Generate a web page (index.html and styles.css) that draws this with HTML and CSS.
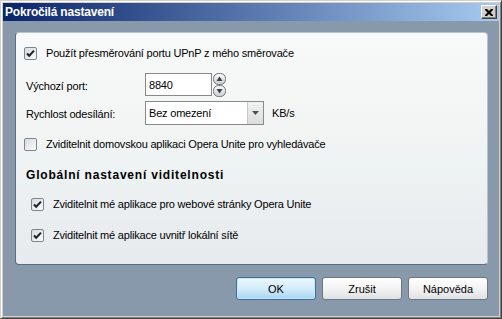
FILE: index.html
```html
<!DOCTYPE html>
<html>
<head>
<meta charset="utf-8">
<link rel="stylesheet" href="styles.css">
</head>
<body>
<div class="window">
  <div class="titlebar">
    <span class="title">Pokročilá nastavení</span>
    <span class="close">
      <svg width="8" height="7" viewBox="0 0 8 7"><path d="M0 0h2l2 2 2-2h2v1L5.5 3.5 8 6v1H6L4 5 2 7H0V6l2.5-2.5L0 1z" fill="#000"/></svg>
    </span>
  </div>
  <div class="body">
    <div class="panel">
      <label class="row r1 check">
        <span class="cb on"><svg width="13" height="13" viewBox="0 0 13 13"><path d="M3 6.5l2.2 2.3L10 3.6" fill="none" stroke="#1d2329" stroke-width="2"/></svg></span>
        <span>Použít přesměrování portu UPnP z mého směrovače</span>
      </label>
      <div class="row r2 field">
        <span class="lbl">Výchozí port:</span>
        <span class="input">8840</span>
        <span class="spin">
          <svg width="13" height="24" viewBox="0 0 13 24">
            <defs><linearGradient id="sg" x1="0" y1="0" x2="0" y2="1"><stop offset="0" stop-color="#fdfdfd"/><stop offset="1" stop-color="#c9ccd1"/></linearGradient></defs>
            <rect x="0.5" y="0.5" width="12" height="11" rx="5" fill="url(#sg)" stroke="#6b737b"/>
            <rect x="0.5" y="12.5" width="12" height="11" rx="5" fill="url(#sg)" stroke="#6b737b"/>
            <path d="M3.5 8h6L6.5 3.5z" fill="#3a4048"/>
            <path d="M3.5 16h6L6.5 20.5z" fill="#3a4048"/>
          </svg>
        </span>
      </div>
      <div class="row r3 field">
        <span class="lbl">Rychlost odesílání:</span>
        <span class="select"><span class="seltext">Bez omezení</span><span class="arrow"><svg width="7" height="4" viewBox="0 0 7 4"><path d="M0 0h7L3.5 4z" fill="#4a525a"/></svg></span></span>
        <span class="unit">KB/s</span>
      </div>
      <label class="row r4 check">
        <span class="cb"></span>
        <span>Zviditelnit domovskou aplikaci Opera Unite pro vyhledávače</span>
      </label>
      <div class="row r5 heading">Globální nastavení viditelnosti</div>
      <label class="row r6 check indent">
        <span class="cb on"><svg width="13" height="13" viewBox="0 0 13 13"><path d="M3 6.5l2.2 2.3L10 3.6" fill="none" stroke="#1d2329" stroke-width="2"/></svg></span>
        <span>Zviditelnit mé aplikace pro webové stránky Opera Unite</span>
      </label>
      <label class="row r7 check indent">
        <span class="cb on"><svg width="13" height="13" viewBox="0 0 13 13"><path d="M3 6.5l2.2 2.3L10 3.6" fill="none" stroke="#1d2329" stroke-width="2"/></svg></span>
        <span>Zviditelnit mé aplikace uvnitř lokální sítě</span>
      </label>
    </div>
    <div class="buttons">
      <button class="btn default">OK</button>
      <button class="btn">Zrušit</button>
      <button class="btn">Nápověda</button>
    </div>
  </div>
</div>
</body>
</html>
```

FILE: styles.css
```css
html, body {
  margin: 0;
  padding: 0;
  background: #d4d0c8;
}
.window {
  width: 502px;
  height: 319px;
  box-sizing: border-box;
  background: #d4d0c8;
  border-top: 1px solid #d4d0c8;
  border-left: 1px solid #d4d0c8;
  border-right: 1px solid #404040;
  border-bottom: 1px solid #404040;
  box-shadow: inset 1px 1px 0 #ffffff, inset -1px -1px 0 #808080;
  padding: 2px;
  display: flex;
  flex-direction: column;
  font-family: "Liberation Sans", Arial, sans-serif;
  font-size: 11px;
  letter-spacing: -0.2px;
  color: #000;
}
.titlebar {
  height: 18px;
  flex: none;
  background: linear-gradient(to right, #0a246a, #a6caf0);
  display: flex;
  align-items: center;
  padding-left: 2px;
  padding-right: 2px;
}
.title {
  color: #fff;
  font-weight: bold;
  font-size: 12px;
  flex: 1;
  letter-spacing: -0.2px;
}
.close {
  width: 16px;
  height: 14px;
  box-sizing: border-box;
  background: #d4d0c8;
  border-top: 1px solid #fff;
  border-left: 1px solid #fff;
  border-right: 1px solid #404040;
  border-bottom: 1px solid #404040;
  box-shadow: inset -1px -1px 0 #808080;
  display: flex;
  align-items: center;
  justify-content: center;
}
.body {
  flex: 1;
  background: #8799ab;
  padding: 11px 11px 0 12px;
  display: flex;
  flex-direction: column;
}
.panel {
  height: 233px;
  box-sizing: border-box;
  border: 1px solid #b9c3cc;
  border-left-color: #5f6d7a;
  border-bottom-color: #5f6d7a;
  border-radius: 4px;
  background: linear-gradient(to bottom, #f8faf9 0%, #f3f5f4 40%, #eef3f3 55%, #e7eaee 100%);
  padding: 7px 0 0 8px;
  display: flex;
  flex-direction: column;
}
.row {
  display: flex;
  align-items: center;
}
.check {
  height: 26px;
  gap: 9px;
}
.indent {
  padding-left: 7px;
}
.r2 { margin-top: 7px; height: 23px; }
.r3 { margin-top: 5px; height: 24px; }
.r4 { margin-top: 6px; }
.r5 { margin-top: 7px; height: 22px; }
.r6 { margin-top: 5px; }
.r7 { margin-top: 5px; }
.cb {
  width: 13px;
  height: 13px;
  box-sizing: border-box;
  border: 1px solid #7b8691;
  border-radius: 2px;
  background: linear-gradient(135deg, #d6dadf, #fbfbfb);
  position: relative;
  flex: none;
}
.cb svg {
  position: absolute;
  left: -1px;
  top: -1px;
}
.lbl {
  width: 121px;
  box-sizing: border-box;
  padding-left: 2px;
  padding-top: 2px;
}
.input {
  width: 67px;
  height: 23px;
  box-sizing: border-box;
  border: 1px solid #8a8a8a;
  background: #fff;
  display: flex;
  align-items: center;
  padding-left: 3px;
}
.spin {
  margin-left: 1px;
  height: 24px;
  display: flex;
}
.select {
  width: 119px;
  height: 24px;
  box-sizing: border-box;
  border: 1px solid #8a8a8a;
  background: #fff;
  display: flex;
  align-items: stretch;
}
.seltext {
  flex: 1;
  display: flex;
  align-items: center;
  padding-left: 3px;
}
.arrow {
  width: 15px;
  background: linear-gradient(to bottom, #f2f2f2, #dcdcdc);
  border-left: 1px solid #c8c8c8;
  display: flex;
  align-items: center;
  justify-content: center;
}
.unit {
  margin-left: 8px;
}
.heading {
  font-weight: bold;
  font-size: 12px;
  letter-spacing: 0.8px;
  padding-left: 2px;
}
.buttons {
  margin-top: 12px;
  display: flex;
  justify-content: flex-end;
  gap: 6px;
}
.btn {
  width: 80px;
  height: 23px;
  box-sizing: border-box;
  font-family: "Liberation Sans", Arial, sans-serif;
  font-size: 11px;
  color: #000;
  border: 1px solid #6e7780;
  border-radius: 3px;
  background: linear-gradient(to bottom, #ffffff 0%, #f3f3f3 50%, #dfe1e3 100%);
  padding: 0;
}
.btn.default {
  border-color: #3d6f9c;
  background: linear-gradient(to bottom, #eef7fd 0%, #d3ecfa 50%, #a9d6f2 100%);
  box-shadow: inset 0 0 0 1px #c6e6f9;
}
```
